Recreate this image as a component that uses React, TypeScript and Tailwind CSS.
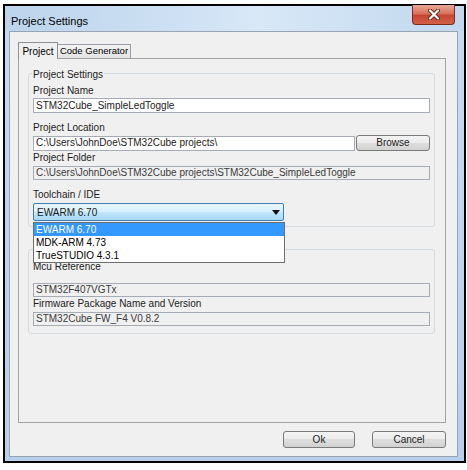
import React from "react";

function Field({
  value,
  disabled,
  className = "",
}: {
  value: string;
  disabled?: boolean;
  className?: string;
}) {
  return (
    <div
      className={`flex items-center px-[2px] border border-[#a5acb5] leading-none whitespace-nowrap overflow-hidden ${
        disabled ? "bg-[#f0f0f0] text-[#3a3a3a]" : "bg-white text-[#222]"
      } ${className}`}
    >
      {value}
    </div>
  );
}

function Label({ text, className = "" }: { text: string; className?: string }) {
  return (
    <div className={`h-[14px] leading-[14px] px-[4px] text-[#1c1c1c] whitespace-nowrap ${className}`}>
      {text}
    </div>
  );
}

function WinButton({ label, className = "" }: { label: string; className?: string }) {
  return (
    <button
      className={`flex items-center justify-center rounded-[3px] border border-[#7a7a7a] text-[#222] leading-none bg-[linear-gradient(to_bottom,#f4f4f4_0%,#ececec_50%,#dedede_50%,#d2d2d2_100%)] ${className}`}
    >
      {label}
    </button>
  );
}

export default function App() {
  const toolchains = ["EWARM 6.70", "MDK-ARM 4.73", "TrueSTUDIO 4.3.1"];

  return (
    <div className="w-[467px] h-[470px] bg-white pt-[4px] pl-[3px] font-['Liberation_Sans',Arial,sans-serif] text-[10px]">
      <div className="w-[463px] h-[459px] border-2 border-black bg-[linear-gradient(to_bottom,#c6dcf2,#b6d0ec)] flex flex-col">
        {/* title bar */}
        <div className="h-[25px] flex justify-between bg-[linear-gradient(to_right,#bcd4ec_0%,#cfe1f4_40%,#d8e8f7_55%,#c2d8ef_100%)]">
          <div className="pl-[6px] pt-[8px] h-[14px] leading-[14px] text-[11px] text-black">
            Project Settings
          </div>
          <div className="mr-[9px] -mt-[1px] w-[43px] h-[20px] rounded-b-[4px] border border-t-0 border-[#7d2b1f] bg-[linear-gradient(to_bottom,#e9a897_0%,#d9725c_45%,#c74631_55%,#d4604a_100%)] flex items-center justify-center">
            <svg width="14" height="11" viewBox="0 0 14 11">
              <path d="M3 1.5 L11 9.5 M11 1.5 L3 9.5" stroke="#6b2419" strokeWidth="4" strokeLinecap="round" />
              <path d="M3 1.5 L11 9.5 M11 1.5 L3 9.5" stroke="#fff" strokeWidth="2.2" strokeLinecap="round" />
            </svg>
          </div>
        </div>

        {/* client area */}
        <div className="ml-[4px] mr-[6px] mb-[4px] h-[426px] border border-[#98a4b3] bg-[#f0f0f0] flex flex-col">
          {/* tabs */}
          <div className="pt-[10px] pl-[8px] flex items-end h-[26px]">
            <div className="relative z-10 -mb-[1px] w-[40px] h-[17px] border border-b-0 border-[#8c9099] bg-[#f0f0f0] flex items-center justify-center text-black whitespace-nowrap">
              Project
            </div>
            <div className="w-[73px] h-[14px] border border-l-0 border-b-0 border-[#9a9ea6] bg-[linear-gradient(to_bottom,#f5f5f5,#e2e2e2)] flex items-center justify-center text-black text-[9.5px] whitespace-nowrap">
              Code Generator
            </div>
          </div>

          {/* tab panel */}
          <div className="ml-[8px] w-[428px] h-[365px] border border-[#a3a3a3] bg-[#f0f0f0] pl-[9px] pt-[14px]">
            {/* Project Settings group */}
            <div className="relative w-[407px] h-[154px] border border-[#d3dce3] rounded-[3px] pt-[10px] flex flex-col">
              <span className="absolute -top-[6px] left-[3px] px-[1px] h-[14px] leading-[14px] bg-[#f0f0f0] text-[#1c1c1c]">
                Project Settings
              </span>
              <Label text="Project Name" />
              <div className="px-[4px]">
                <Field value="STM32Cube_SimpleLedToggle" className="h-[15px]" />
              </div>
              <Label text="Project Location" className="mt-[8px]" />
              <div className="px-[4px] flex items-center gap-[1px] h-[16px]">
                <Field value="C:\Users\JohnDoe\STM32Cube projects\" className="h-[15px] flex-1" />
                <WinButton label="Browse" className="w-[74px] h-[16px]" />
              </div>
              <Label text="Project Folder" />
              <div className="px-[4px] mt-[1px]">
                <Field
                  value="C:\Users\JohnDoe\STM32Cube projects\STM32Cube_SimpleLedToggle"
                  disabled
                  className="h-[14px]"
                />
              </div>
              <Label text="Toolchain / IDE" className="mt-[8px]" />
              <div className="px-[4px] mt-[1px]">
                <div className="relative w-[251px]">
                  <div className="h-[18px] border border-[#3c7fb1] rounded-[2px] bg-[linear-gradient(to_bottom,#eaf6fd_0%,#d9f0fc_45%,#bee6fd_55%,#a7d9f5_100%)] flex items-center justify-between pl-[3px] pr-[3px] text-[#1a1a1a]">
                    <span>EWARM 6.70</span>
                    <svg width="8" height="5" viewBox="0 0 8 5">
                      <path d="M0 0 H8 L4 5 Z" fill="#111" />
                    </svg>
                  </div>
                  <div className="absolute z-20 top-[19px] left-0 w-[252px] border border-[#6f6f6f] bg-white">
                    {toolchains.map((t, i) => (
                      <div
                        key={t}
                        className={`h-[13px] leading-[13px] pl-[2px] ${
                          i === 0 ? "bg-[#3399ff] text-white" : "text-black"
                        }`}
                      >
                        {t}
                      </div>
                    ))}
                  </div>
                </div>
              </div>
            </div>

            {/* MCU group */}
            <div className="mt-[22px] w-[407px] h-[85px] border border-[#d3dce3] rounded-[3px] pt-[10px] flex flex-col">
              <Label text="Mcu Reference" />
              <div className="px-[4px] mt-[9px]">
                <Field value="STM32F407VGTx" disabled className="h-[14px]" />
              </div>
              <Label text="Firmware Package Name and Version" />
              <div className="px-[4px] mt-[1px]">
                <Field value="STM32Cube FW_F4 V0.8.2" disabled className="h-[14px]" />
              </div>
            </div>
          </div>

          {/* dialog buttons */}
          <div className="ml-[8px] w-[428px] mt-[8px] flex justify-end gap-[17px]">
            <WinButton label="Ok" className="w-[72px] h-[17px]" />
            <WinButton label="Cancel" className="w-[74px] h-[17px]" />
          </div>
        </div>
      </div>
    </div>
  );
}
